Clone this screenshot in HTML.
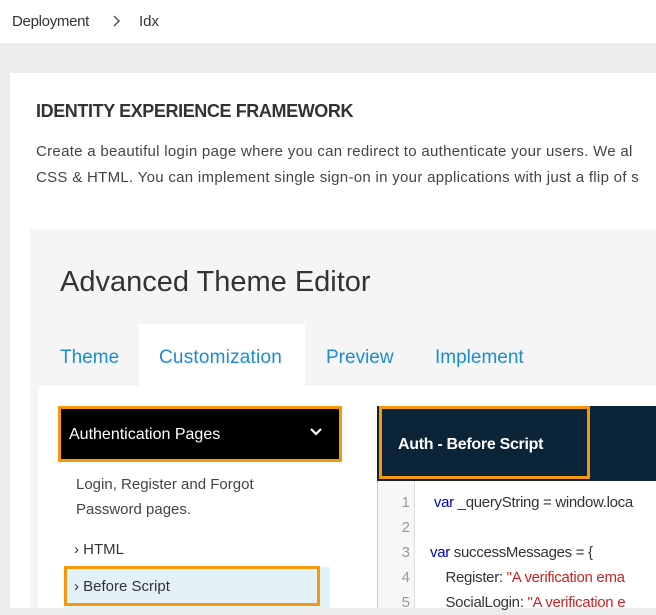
<!DOCTYPE html>
<html><head><style>
*{margin:0;padding:0;box-sizing:border-box}
body{width:656px;height:608px;overflow:hidden;background:#ebecee;font-family:"Liberation Sans",sans-serif;position:relative;color:#333}
.a{position:absolute;white-space:nowrap}
</style></head><body>
<div class="a" style="left:0;top:0;width:656px;height:43px;background:#fff"></div>
<div class="a" style="left:12px;top:13px;font-size:15px;color:#333;letter-spacing:-0.3px">Deployment</div>
<svg class="a" style="left:112px;top:14px" width="10" height="14"><path d="M2 2l5 5-5 5" stroke="#555" stroke-width="1.5" fill="none"/></svg>
<div class="a" style="left:139px;top:13px;font-size:15px;color:#333">Idx</div>
<div class="a" style="left:10px;top:73px;width:646px;height:535px;background:#fff"></div>
<div class="a" style="left:36px;top:101px;font-size:18px;font-weight:bold;color:#333;letter-spacing:-0.4px">IDENTITY EXPERIENCE FRAMEWORK</div>
<div class="a" style="left:36px;top:139px;font-size:15px;color:#444;line-height:26px;letter-spacing:0.3px">Create a beautiful login page where you can redirect to authenticate your users. We al<br>CSS &amp; HTML. You can implement single sign-on in your applications with just a flip of s</div>
<div class="a" style="left:30px;top:229px;width:626px;height:379px;background:#f5f5f5"></div>
<div class="a" style="left:60px;top:266px;font-size:29px;color:#333;letter-spacing:0px">Advanced Theme Editor</div>
<div class="a" style="left:139px;top:324px;width:166px;height:62px;background:#fff"></div>
<div class="a" style="left:60px;top:347px;font-size:19px;color:#1a8ccf">Theme</div>
<div class="a" style="left:159px;top:347px;font-size:19px;color:#1a8ccf;letter-spacing:0.2px">Customization</div>
<div class="a" style="left:326px;top:347px;font-size:19px;color:#1a8ccf">Preview</div>
<div class="a" style="left:435px;top:347px;font-size:19px;color:#1a8ccf">Implement</div>
<div class="a" style="left:38px;top:386px;width:618px;height:222px;background:#fff"></div>
<div class="a" style="left:58px;top:406px;width:284px;height:56px;background:#000;border:3px solid #f7980a"></div>
<div class="a" style="left:69px;top:426px;font-size:16px;color:#fff;letter-spacing:0px">Authentication Pages</div>
<svg class="a" style="left:309px;top:426px" width="14" height="12"><path d="M2 3l5 5 5-5" stroke="#fff" stroke-width="2.2" fill="none"/></svg>
<div class="a" style="left:76px;top:472px;font-size:15px;color:#444;line-height:25px">Login, Register and Forgot<br>Password pages.</div>
<div class="a" style="left:74px;top:541px;font-size:15px;color:#333">› HTML</div>
<div class="a" style="left:64px;top:567px;width:266px;height:41px;background:#e3f1f8"></div>
<div class="a" style="left:64px;top:566px;width:256px;height:40px;border:3px solid #f7980a"></div>
<div class="a" style="left:74px;top:578px;font-size:15px;color:#333">› Before Script</div>
<div class="a" style="left:377px;top:406px;width:279px;height:202px;background:#fff;border-left:1px solid #ccc"></div>
<div class="a" style="left:377px;top:406px;width:279px;height:75px;background:#0c2438"></div>
<div class="a" style="left:379px;top:406px;width:211px;height:73px;border:3px solid #f7980a"></div>
<div class="a" style="left:398px;top:436px;font-size:16px;font-weight:bold;color:#fff;letter-spacing:-0.3px">Auth - Before Script</div>
<div class="a" style="left:378px;top:481px;width:37px;height:127px;background:#f7f7f7;border-right:1px solid #ddd"></div>
<div class="a" style="left:378px;top:490px;width:32px;text-align:right;font-size:15px;line-height:25px;color:#999">1<br>2<br>3<br>4<br>5</div>
<div class="a" style="left:430px;top:490px;font-size:15px;line-height:25px;color:#333;letter-spacing:-0.3px">&nbsp;<span style="color:#00c">var</span> _queryString = window.loca<br>&nbsp;<br><span style="color:#00c">var</span> successMessages = {<br>&nbsp;&nbsp;&nbsp;&nbsp;Register: <span style="color:#c22">"A verification ema</span><br>&nbsp;&nbsp;&nbsp;&nbsp;SocialLogin: <span style="color:#c22">"A verification e</span></div>
</body></html>
